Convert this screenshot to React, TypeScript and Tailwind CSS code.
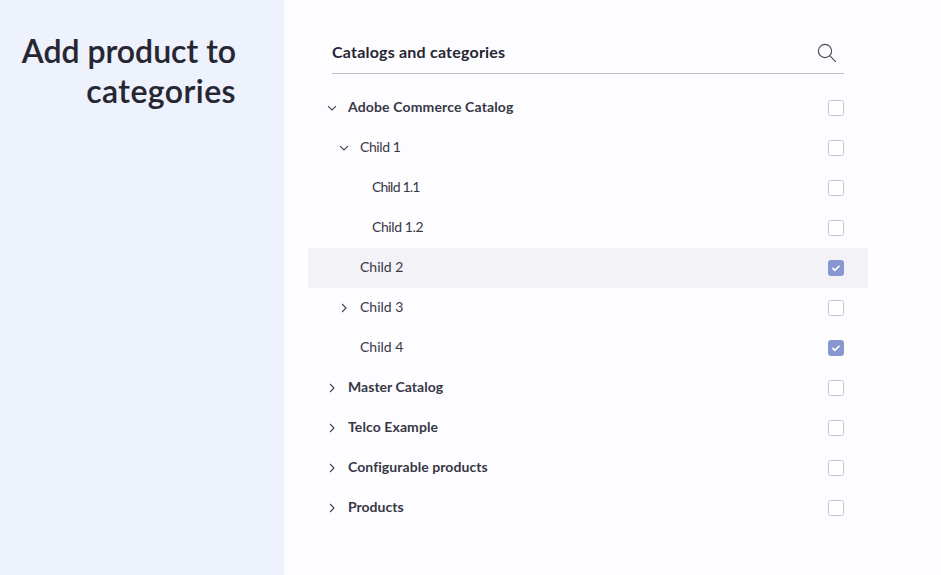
type Row = {
  label: string;
  level: 0 | 1 | 2;
  icon?: 'down' | 'right';
  checked?: boolean;
  active?: boolean;
  tracking: string;
};

const rows: Row[] = [
  { label: 'Adobe Commerce Catalog', level: 0, icon: 'down', tracking: 'tracking-[0.14px]' },
  { label: 'Child 1', level: 1, icon: 'down', tracking: 'tracking-[-0.4px]' },
  { label: 'Child 1.1', level: 2, tracking: 'tracking-[-0.8px]' },
  { label: 'Child 1.2', level: 2, tracking: 'tracking-[-0.4px]' },
  { label: 'Child 2', level: 1, checked: true, active: true, tracking: 'tracking-normal' },
  { label: 'Child 3', level: 1, icon: 'right', tracking: 'tracking-normal' },
  { label: 'Child 4', level: 1, checked: true, tracking: 'tracking-normal' },
  { label: 'Master Catalog', level: 0, icon: 'right', tracking: 'tracking-[0.03px]' },
  { label: 'Telco Example', level: 0, icon: 'right', tracking: 'tracking-[0.1px]' },
  { label: 'Configurable products', level: 0, icon: 'right', tracking: 'tracking-[0.07px]' },
  { label: 'Products', level: 0, icon: 'right', tracking: 'tracking-normal' },
];
const pads = ['pl-[18px]', 'pl-[30px]', 'pl-[42px]'];

function Chevron({ dir }: { dir?: 'down' | 'right' }) {
  return (
    <svg width="12" height="12" viewBox="0 0 12 12" className="mr-[10px] shrink-0" fill="none" stroke="#444351" strokeWidth="1.15">
      {dir === 'down' && <path d="M2 4.2l4 3.8 4-3.8" />}
      {dir === 'right' && <path d="M4.1 2l3.9 4-3.9 4" />}
    </svg>
  );
}

function Checkbox({ checked }: { checked?: boolean }) {
  return (
    <span className={`ml-auto flex size-4 items-center justify-center rounded-[2.5px] border ${checked ? 'border-[#8797cf] bg-[#8797cf]' : 'border-[#c5c4d2] bg-white'}`}>
      {checked && (
        <svg width="10" height="10" viewBox="0 0 10 10" className="shrink-0" fill="none" stroke="white" strokeWidth="1.7">
          <path d="M1.4 4.8l2.5 2.5 4.5-4.5" />
        </svg>
      )}
    </span>
  );
}

export default function App() {
  return (
    <div className="flex h-[575px] w-[941px] overflow-hidden bg-[#fdfdff] font-['Lato',sans-serif] text-[#262633]">
      <aside className="w-[284px] shrink-0 bg-[#edf2fc] pr-12 pt-[31px] text-right text-[32px] font-semibold leading-10">
        <h1 className="[-webkit-text-stroke:0.15px_#262633]">
          <span className="block whitespace-nowrap">Add product to</span>
          <span className="block tracking-[0.45px]">categories</span>
        </h1>
      </aside>
      <main className="w-[584px] pl-6">
        <header className="mx-6 flex h-[74px] items-end justify-between border-b border-[#c3c2cd] pb-[10px]">
          <h2 className="-mb-px text-base font-bold tracking-[0.21px]">Catalogs and categories</h2>
          <svg width="20" height="20" viewBox="0 0 20 20" className="mr-[7px]" fill="none" stroke="#4a4955" strokeWidth="1.15">
            <circle cx="8" cy="8" r="6.6" />
            <path d="M12.7 12.7l6.1 6.1" />
          </svg>
        </header>
        <div className="pt-[14px]">
          {rows.map((r) => (
            <div key={r.label} className={`flex h-10 items-center pr-6 text-sm text-[#383746] ${pads[r.level]} ${r.level === 0 ? 'font-bold' : ''} ${r.active ? 'bg-[#f3f2f7]' : ''}`}>
              <Chevron dir={r.icon} />
              <span className={`pb-0.5 ${r.tracking}`}>{r.label}</span>
              <Checkbox checked={r.checked} />
            </div>
          ))}
        </div>
      </main>
    </div>
  );
}
